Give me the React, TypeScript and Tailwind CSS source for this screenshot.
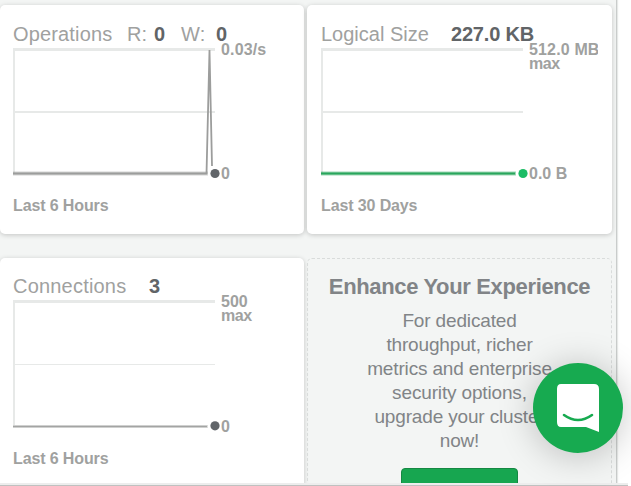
import React from "react";

type CardProps = {
  header: React.ReactNode;
  chart: React.ReactNode;
  maxLabel: React.ReactNode;
  minLabel: string;
  period: string;
  className?: string;
  labelClass?: string;
  periodClass?: string;
};

function MetricCard({ header, chart, maxLabel, minLabel, period, className = "pl-[13px] pt-[17px]", labelClass = "h-[142px]", periodClass = "mt-3" }: CardProps) {
  return (
    <section className={`h-[229px] rounded-[5px] bg-white shadow-[0_1px_5px_rgba(0,0,0,0.2)] ${className}`}>
      <h2 className="flex h-6 whitespace-pre text-[20px] leading-6 text-[#a0a19f]">{header}</h2>
      <div className="flex h-[138px]">
        {chart}
        <div className={`-mt-[6px] flex w-[69px] flex-col justify-between overflow-hidden whitespace-nowrap pt-[3px] text-[16px] font-bold leading-[14px] text-[#a0a19f] ${labelClass}`}>
          <div>{maxLabel}</div>
          <div className="pb-px">{minLabel}</div>
        </div>
      </div>
      <div className={`text-[16px] font-bold leading-5 tracking-[-0.12px] text-[#a0a19f] ${periodClass}`}>{period}</div>
    </section>
  );
}

function Chart({ color, dot, spike, connections }: { color: string; dot: string; spike?: boolean; connections?: boolean }) {
  return (
    <svg width="208" height="138" viewBox="0 0 208 138" className="shrink-0" fill="none">
      {connections ? (
        <>
          <path d="M0 3.5H202" stroke="#e7e9e8" strokeWidth="3" />
          <path d="M0 66.5H202" stroke="#e7e9e8" />
          <path d="M1 5V129" stroke="#e7e9e8" strokeWidth="2" />
          <path d="M0 128.5H195" stroke="#dedfde" strokeWidth="3" />
          <path d="M0 128.5H194" stroke={color} strokeWidth="1.5" />
        </>
      ) : (
        <>
          <path d="M0 3.5H202" stroke="#e7e9e8" strokeWidth="3" />
          <path d="M0 66H202" stroke="#e7e9e8" strokeWidth="2" />
          <path d="M1 5V128" stroke="#e7e9e8" strokeWidth="2" />
          <path d="M0 127.5H195" stroke={color} strokeOpacity="0.45" strokeWidth="4" />
          <path d="M0 127.5H194" stroke={color} strokeWidth="2" />
        </>
      )}
      {spike && <path d="M193.5 128L196.5 4L199 120" stroke="#9c9d9c" strokeWidth="1.8" strokeLinejoin="bevel" />}
      <circle cx="202" cy={connections ? 127.8 : 127.5} r="4.6" fill={dot} />
    </svg>
  );
}

export default function App() {
  return (
    <div className="h-[486px] w-[631px] overflow-hidden bg-white [font-family:'Liberation_Sans',Arial,sans-serif]">
      <main className="grid h-[483px] w-[617px] grid-cols-[304px_305px] content-start gap-x-[3px] gap-y-6 overflow-hidden border-r border-[#c9cccb] bg-[#f3f5f4] pt-[5px] shadow-[1px_0_1px_#e7e9e8]">
        <MetricCard
          header={
            <>
              <span className="w-[114px] tracking-[0.15px]">Operations</span>
              <span className="w-[27px]">R:</span>
              <b className="w-[27px] text-[#616467]">0</b>
              <span className="w-[35px] tracking-[0.3px]">W:</span>
              <b className="text-[#616467]">0</b>
            </>
          }
          chart={<Chart color="#9c9d9c" dot="#616569" spike />}
          maxLabel={<span className="tracking-[0.15px]">0.03/s</span>}
          minLabel="0"
          period="Last 6 Hours"
        />
        <MetricCard
          className="pl-[14px] pt-[17px]"
          header={
            <>
              <span className="w-[130px]">Logical Size</span>
              <b className="tracking-[-0.2px] text-[#616467]">227.0 KB</b>
            </>
          }
          chart={<Chart color="#29a65c" dot="#1cbc65" />}
          maxLabel={<span className="tracking-[0.15px]">512.0 MB<br /><span className="tracking-[-0.5px]">max</span></span>}
          minLabel="0.0 B"
          period="Last 30 Days"
        />
        <MetricCard
          className="pl-[13px] pt-4"
          labelClass="h-[143px]"
          periodClass="mt-[13px]"
          header={
            <>
              <span className="w-[136px] tracking-[0.2px]">Connections</span>
              <b className="text-[#616467]">3</b>
            </>
          }
          chart={<Chart color="#a3a4a3" dot="#616569" connections />}
          maxLabel={<>500<br /><span className="tracking-[-0.5px]">max</span></>}
          minLabel="0"
          period="Last 6 Hours"
        />
        <section className="flex h-[260px] flex-col items-center rounded-[5px] border border-dashed border-[#d9dcdb] pt-[14px] text-center text-[#818487]">
          <h2 className="whitespace-nowrap text-[22px] font-bold leading-7 tracking-[-0.35px]">Enhance Your Experience</h2>
          <p className="mt-2 whitespace-nowrap text-[19px] leading-6 tracking-[-0.15px]">
            For dedicated<br />throughput, richer<br />metrics and enterprise<br />security options,<br />upgrade your cluster<br />now!
          </p>
          <div className="mt-[15px] h-10 w-[117px] shrink-0 rounded-[4px] border border-[#158843] bg-[#17a650]" />
        </section>
      </main>
      <footer className="h-[3px] w-[628px] border-b border-[#bfc1c0] bg-[#ededed]" />
      <button aria-label="Open chat" className="absolute left-[533px] top-[363px] flex h-[90px] w-[90px] items-center justify-center rounded-full bg-[#17aa50] shadow-[0_3px_36px_rgba(0,0,0,0.23)]">
        <svg width="44" height="50" viewBox="0 0 44 50" fill="none">
          <path d="M5 1H38Q43 1 43 6V49L30 44H5Q1 44 1 39V6Q1 1 5 1Z" fill="white" />
          <path d="M8 32Q22 42 36 32" stroke="#17aa50" strokeWidth="2.6" strokeLinecap="round" />
        </svg>
      </button>
    </div>
  );
}
